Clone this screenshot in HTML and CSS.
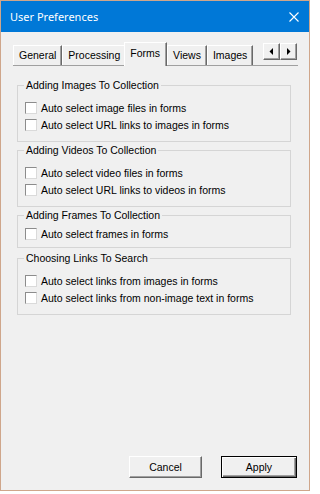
FILE: index.html
```html
<!DOCTYPE html>
<html>
<head>
<meta charset="utf-8">
<link rel="stylesheet" href="styles.css">
</head>
<body>
<div class="window">
  <div class="titlebar">
    <span class="title">User Preferences</span>
    <svg class="close" width="10" height="10" viewBox="0 0 10 10"><path d="M0.5 0.5 L9.5 9.5 M9.5 0.5 L0.5 9.5" stroke="#fff" stroke-width="1.1" fill="none"/></svg>
  </div>
  <div class="content">
    <div class="tabs">
      <div class="tab">General</div>
      <div class="tab">Processing</div>
      <div class="tab active">Forms</div>
      <div class="tab">Views</div>
      <div class="tab">Images</div>
      <div class="scroller">
        <div class="sbtn"><svg width="5" height="7" viewBox="0 0 5 7"><path d="M4 0 L4 7 L0.5 3.5 Z" fill="#000"/></svg></div>
        <div class="sbtn"><svg width="5" height="7" viewBox="0 0 5 7"><path d="M1 0 L1 7 L4.5 3.5 Z" fill="#000"/></svg></div>
      </div>
    </div>
    <div class="panel">
      <fieldset class="group g1">
        <legend>Adding Images To Collection</legend>
        <div class="rows">
          <div class="row"><span class="check"></span>Auto select image files in forms</div>
          <div class="row"><span class="check"></span>Auto select URL links to images in forms</div>
        </div>
      </fieldset>
      <fieldset class="group g2">
        <legend>Adding Videos To Collection</legend>
        <div class="rows">
          <div class="row"><span class="check"></span>Auto select video files in forms</div>
          <div class="row"><span class="check"></span>Auto select URL links to videos in forms</div>
        </div>
      </fieldset>
      <fieldset class="group g3">
        <legend>Adding Frames To Collection</legend>
        <div class="rows">
          <div class="row"><span class="check"></span>Auto select frames in forms</div>
        </div>
      </fieldset>
      <fieldset class="group g4">
        <legend>Choosing Links To Search</legend>
        <div class="rows">
          <div class="row"><span class="check"></span>Auto select links from images in forms</div>
          <div class="row"><span class="check"></span>Auto select links from non-image text in forms</div>
        </div>
      </fieldset>
    </div>
    <div class="buttons">
      <button class="btn cancel">Cancel</button>
      <button class="btn apply">Apply</button>
    </div>
  </div>
</div>
</body>
</html>
```
FILE: styles.css
```css
html, body {
  margin: 0;
  padding: 0;
  background: #ffffff;
}
body {
  font-family: "Liberation Sans", Arial, sans-serif;
  font-size: 10.5px;
  color: #000;
}
.window {
  box-sizing: border-box;
  width: 310px;
  height: 491px;
  border: 1px solid #cfa68b;
  background: #f0f0f0;
  display: flex;
  flex-direction: column;
}
.titlebar {
  height: 31px;
  background: #0078d7;
  display: flex;
  align-items: center;
  justify-content: space-between;
  padding: 0 10px 0 9px;
  flex-shrink: 0;
}
.title {
  color: #fff;
  font-family: "Noto Sans", "Liberation Sans", sans-serif;
  font-size: 11px;
  line-height: 14px;
}
.close {
  display: block;
}
.content {
  flex: 1;
  display: flex;
  flex-direction: column;
  padding: 10px 11px 12px 12px;
}
.tabs {
  height: 23px;
  display: flex;
  align-items: flex-end;
  flex-shrink: 0;
}
.tab {
  box-sizing: border-box;
  height: 20px;
  line-height: 18px;
  padding: 0 5px;
  border-top: 1px solid #fff;
  border-left: 1px solid #fff;
  border-right: 1px solid #696969;
  box-shadow: inset -1px 0 0 #a0a0a0;
  white-space: nowrap;
}
.tab.active {
  height: 24px;
  line-height: 20px;
  margin-left: -2px;
  margin-bottom: -1px;
  padding: 0 6px 0 5px;
  background: #f0f0f0;
  position: relative;
  z-index: 1;
}
.scroller {
  align-self: flex-start;
  margin: 1px 1px 0 auto;
  display: flex;
}
.sbtn {
  box-sizing: border-box;
  width: 17px;
  height: 17px;
  border-top: 1px solid #fff;
  border-left: 1px solid #fff;
  border-right: 1px solid #696969;
  border-bottom: 1px solid #696969;
  box-shadow: inset -1px -1px 0 #a0a0a0;
  display: flex;
  align-items: center;
  justify-content: center;
}
.panel {
  border-top: 1px solid #a0a0a0;
  display: flex;
  flex-direction: column;
}
.group {
  margin: 2px 7px 0 4px;
  padding: 0 0 8px 7px;
  border: 1px solid #d5d5d5;
  min-width: 0;
}
.group legend {
  padding: 0 2px;
  margin-left: -1px;
  line-height: 13px;
}
.g1 { margin-top: 13px; }
.g3 { padding-bottom: 5px; }
.g4 { margin-top: 4px; }
.rows {
  margin-top: 7px;
  display: flex;
  flex-direction: column;
}
.g3 .rows { margin-top: 3px; }
.row {
  height: 17px;
  display: flex;
  align-items: center;
  gap: 4px;
  white-space: nowrap;
}
.check {
  box-sizing: border-box;
  width: 12px;
  height: 12px;
  background: #fff;
  border-top: 1px solid #8c8c8c;
  border-left: 1px solid #8c8c8c;
  border-right: 1px solid #dadada;
  border-bottom: 1px solid #dadada;
  flex-shrink: 0;
}
.buttons {
  margin-top: auto;
  display: flex;
  justify-content: flex-end;
  gap: 19px;
  padding-right: 1px;
}
.btn {
  box-sizing: border-box;
  height: 22px;
  font-family: "Liberation Sans", Arial, sans-serif;
  font-size: 10.5px;
  color: #000;
  background: #f0f0f0;
  border-top: 1px solid #fff;
  border-left: 1px solid #fff;
  border-right: 1px solid #696969;
  border-bottom: 1px solid #696969;
  box-shadow: inset -1px -1px 0 #a0a0a0;
  padding: 0;
}
.cancel { width: 73px; }
.apply {
  width: 76px;
  border: 1px solid #000;
  box-shadow: inset 1px 1px 0 #fff, inset -1px -1px 0 #696969, inset -2px -2px 0 #a0a0a0;
}
```
